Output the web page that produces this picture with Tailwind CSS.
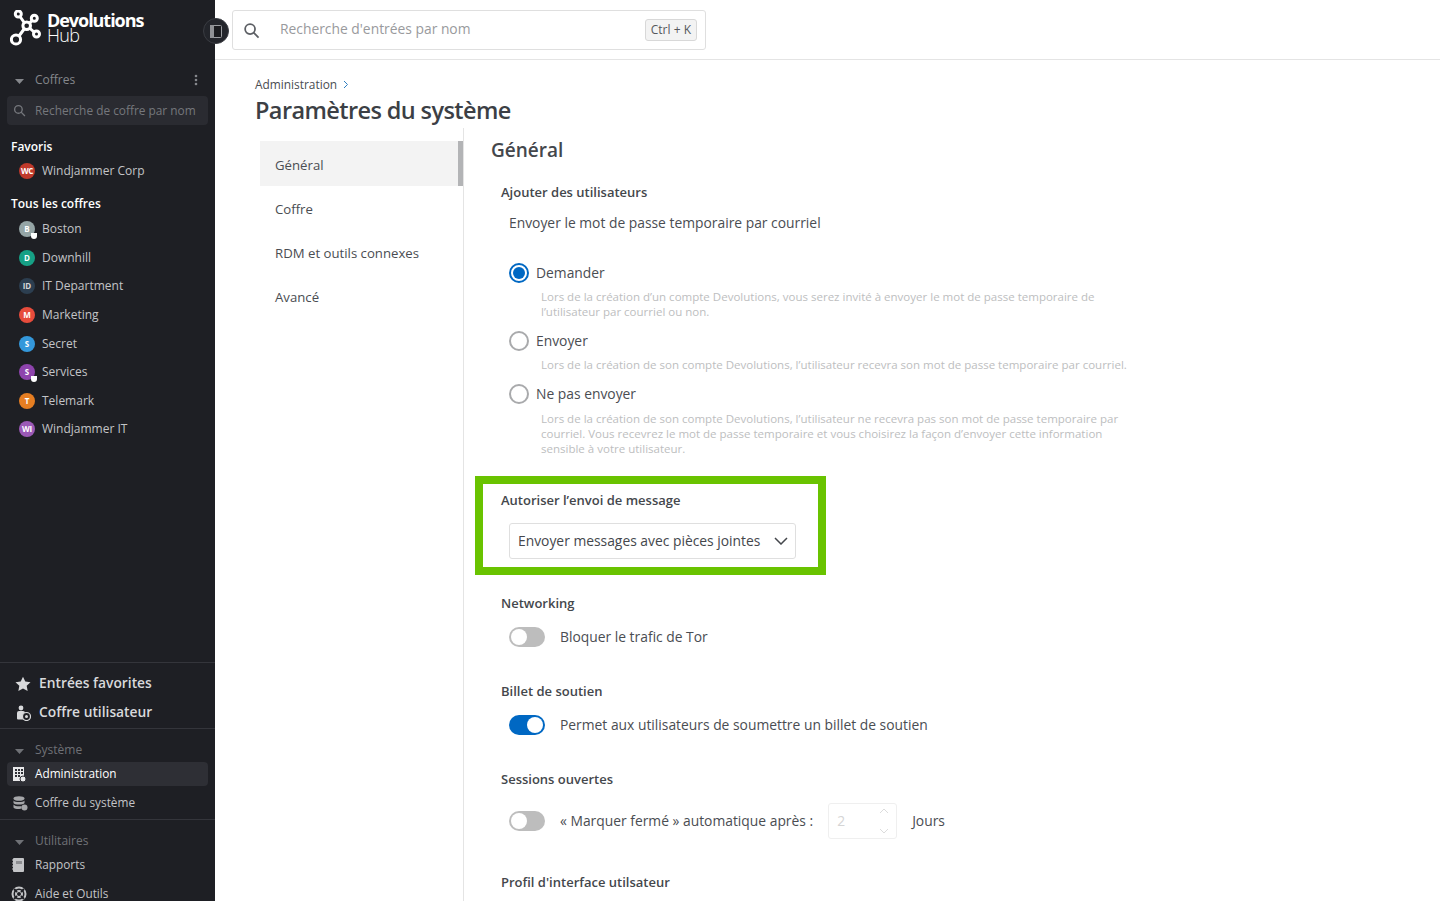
<!DOCTYPE html>
<html lang="fr">
<head>
    <meta charset="UTF-8" />
    <title>Paramètres du système</title>
    <script src="https://cdn.jsdelivr.net/npm/@tailwindcss/browser@4"></script>
</head>
<body class="font-['Open_Sans',sans-serif] bg-white text-[#3c3f45] h-[901px] w-[1440px] overflow-hidden flex">

    <!-- SIDEBAR -->
    <aside class="relative w-[215px] h-[901px] shrink-0 bg-[#1e1f24] flex flex-col overflow-visible z-10">
        <!-- logo -->
        <div class="h-[60px] pl-[10px] pt-[10px] flex items-start gap-[5px]">
            <svg width="32" height="37" viewBox="0 0 32 37" fill="none" stroke="white" stroke-width="3">
                <circle cx="8.300" cy="4" r="3" />
                <circle cx="24.300" cy="8.300" r="3" />
                <circle cx="16.700" cy="15.700" r="3.800" />
                <circle cx="26.500" cy="24" r="3" />
                <circle cx="6" cy="29.500" r="4.600" />
                <path d="M10 6.500l4.500 6.500M22.400 10.200l-3.200 3.200M19.500 18l4.500 4M14.500 18.500L9 26" />
            </svg>
            <div class="text-white text-[18px] leading-[15px] pt-[3px]">
                <div class="font-bold tracking-[-1.05px]">Devolutions</div>
                <div class="font-light tracking-[-0.6px]">Hub</div>
            </div>
        </div>

        <button class="absolute left-[203px] top-[18px] w-[26px] h-[26px] rounded-full bg-[#23252b] border border-[#3a3c42] flex items-center justify-center">
            <svg width="12" height="13" viewBox="0 0 12 13"><rect x="0.500" y="0.500" width="11" height="12" rx="1" fill="#1a1b1f" stroke="#9b9da1" /><rect x="0" y="0" width="4" height="13" fill="#8f9195" /></svg>
        </button>

        <!-- coffres -->
        <div class="h-[20px] mt-[10px] pl-[15px] pr-[17px] flex items-center text-[12px] text-[#85878c]">
            <svg width="9" height="5" viewBox="0 0 9 5" class="mr-[11px] mt-[2px]"><path d="M0 0h9L4.500 5z" fill="#85878c" /></svg>
            <span class="flex-1">Coffres</span>
            <svg width="4" height="12" viewBox="0 0 4 12" fill="#85878c"><circle cx="2" cy="2" r="1.300" /><circle cx="2" cy="6" r="1.300" /><circle cx="2" cy="10" r="1.300" /></svg>
        </div>
        <div class="mx-[7px] mt-[6px] h-[29px] rounded-[4px] bg-[#2a2b31] flex items-center pl-[6px] text-[11.87px] text-[#75777c]">
            <svg width="13" height="13" viewBox="0 0 24 24" fill="none" stroke="#75777c" stroke-width="2.500" class="mr-[9px]"><circle cx="10" cy="10" r="7" /><path d="M15 15l7 7" /></svg>
            <span>Recherche de coffre par nom</span>
        </div>

        <div class="mt-[12px] pl-[11px] text-[12px] font-semibold leading-[20px] text-white">Favoris</div>
        <div class="mt-[2px] h-[24px] pl-[19px] flex items-center gap-[7px] text-[12px] text-[#c3c4c7]">
            <span class="w-[16px] h-[16px] rounded-full bg-[#c0392b] text-white text-[8px] font-bold tracking-[-0.3px] flex items-center justify-center">WC</span>
            <span>Windjammer Corp</span>
        </div>

        <div class="mt-[11px] pl-[11px] text-[12px] font-semibold leading-[20px] text-white">Tous les coffres</div>
        <div class="mt-[1px] flex flex-col text-[12px] text-[#c3c4c7]">
            <div class="h-[28.600px] pl-[19px] flex items-center gap-[7px]">
                <span class="relative w-[16px] h-[16px] rounded-full bg-[#95a5a6] text-white text-[8px] font-bold flex items-center justify-center">B
                    <span class="absolute -right-[2px] -bottom-[2px] w-[6px] h-[6px] rounded-b-full bg-white"></span>
                </span>
                <span>Boston</span>
            </div>
            <div class="h-[28.600px] pl-[19px] flex items-center gap-[7px]">
                <span class="w-[16px] h-[16px] rounded-full bg-[#16a085] text-white text-[8px] font-bold flex items-center justify-center">D</span>
                <span>Downhill</span>
            </div>
            <div class="h-[28.600px] pl-[19px] flex items-center gap-[7px]">
                <span class="w-[16px] h-[16px] rounded-full bg-[#2c3e50] text-[#d5d6d8] text-[8px] font-bold flex items-center justify-center">ID</span>
                <span>IT Department</span>
            </div>
            <div class="h-[28.600px] pl-[19px] flex items-center gap-[7px]">
                <span class="w-[16px] h-[16px] rounded-full bg-[#e74c3c] text-white text-[8px] font-bold flex items-center justify-center">M</span>
                <span>Marketing</span>
            </div>
            <div class="h-[28.600px] pl-[19px] flex items-center gap-[7px]">
                <span class="w-[16px] h-[16px] rounded-full bg-[#3498db] text-white text-[8px] font-bold flex items-center justify-center">S</span>
                <span>Secret</span>
            </div>
            <div class="h-[28.600px] pl-[19px] flex items-center gap-[7px]">
                <span class="relative w-[16px] h-[16px] rounded-full bg-[#8e44ad] text-white text-[8px] font-bold flex items-center justify-center">S
                    <span class="absolute -right-[2px] -bottom-[2px] w-[6px] h-[6px] rounded-b-full bg-white"></span>
                </span>
                <span>Services</span>
            </div>
            <div class="h-[28.600px] pl-[19px] flex items-center gap-[7px]">
                <span class="w-[16px] h-[16px] rounded-full bg-[#e67e22] text-white text-[8px] font-bold flex items-center justify-center">T</span>
                <span>Telemark</span>
            </div>
            <div class="h-[28.600px] pl-[19px] flex items-center gap-[7px]">
                <span class="w-[16px] h-[16px] rounded-full bg-[#9b59b6] text-white text-[8px] font-bold tracking-[-0.3px] flex items-center justify-center">WI</span>
                <span>Windjammer IT</span>
            </div>
        </div>

        <div class="flex-1"></div>

        <!-- bottom -->
        <div class="h-[67px] shrink-0 border-t border-b border-[#34353b] pt-[6px] text-[13.800px] font-semibold text-[#d8d9db]">
            <div class="h-[29px] pl-[15px] flex items-center gap-[8px]">
                <svg width="16" height="16" viewBox="0 0 24 24" fill="#d8d9db"><path d="M12 1l3.400 7.300 7.900 1-5.800 5.400 1.500 7.900L12 18.700l-7 3.900 1.500-7.900L.7 9.300l7.900-1z" /></svg>
                <span>Entrées favorites</span>
            </div>
            <div class="h-[29px] pl-[15px] flex items-center gap-[8px]">
                <svg width="16" height="16" viewBox="0 0 16 16" fill="#d8d9db"><circle cx="6" cy="3" r="2.400" /><path d="M2 8a2 2 0 0 1 2-2h4a2 2 0 0 1 2 2v6.500H3a1 1 0 0 1-1-1z" /><circle cx="11.500" cy="11.500" r="4" fill="#1e1f24" stroke="#d8d9db" stroke-width="1.200" /><circle cx="11.500" cy="11.500" r="1.500" /></svg>
                <span>Coffre utilisateur</span>
            </div>
        </div>
        <div class="h-[91px] shrink-0 border-b border-[#34353b] pt-[11px]">
            <div class="h-[20px] pl-[15px] flex items-center text-[12px] text-[#6f7176]">
                <svg width="9" height="5" viewBox="0 0 9 5" class="mr-[11px] mt-[2px]"><path d="M0 0h9L4.500 5z" fill="#6f7176" /></svg>
                <span>Système</span>
            </div>
            <div class="mx-[7px] mt-[2px] h-[24px] rounded-[4px] bg-[#2e2f35] flex items-center pl-[6px] gap-[9px] text-[11.800px] text-white">
                <svg width="13" height="15" viewBox="0 0 13 15"><rect x="0" y="0" width="11" height="14" fill="#e8e8ea" /><path d="M2 2h2v2H2zM5 2h2v2H5zM8 2h2v2H8zM2 5h2v2H2zM5 5h2v2H5zM8 5h2v2H8zM2 8h2v2H2zM5 8h2v2H5z" fill="#2e2f35" /><circle cx="10" cy="12" r="3" fill="#e8e8ea" stroke="#2e2f35" /></svg>
                <span>Administration</span>
            </div>
            <div class="mx-[7px] mt-[5px] h-[24px] flex items-center pl-[6px] gap-[7px] text-[11.800px] text-[#c3c4c7]">
                <svg width="15" height="15" viewBox="0 0 15 15" fill="#a5a6a9"><ellipse cx="6" cy="2.500" rx="5.500" ry="2.300" /><path d="M.5 4.500c1 2 10 2 11 0v2.500c-1 2-10 2-11 0zM.5 8.500c1 2 7 2 8 1.500v2.500c-1 .8-7 .8-8-1z" /><circle cx="11.500" cy="11.500" r="3" /></svg>
                <span>Coffre du système</span>
            </div>
        </div>
        <div class="h-[81px] shrink-0 pt-[11px]">
            <div class="h-[20px] pl-[15px] flex items-center text-[12px] text-[#6f7176]">
                <svg width="9" height="5" viewBox="0 0 9 5" class="mr-[11px] mt-[2px]"><path d="M0 0h9L4.500 5z" fill="#6f7176" /></svg>
                <span>Utilitaires</span>
            </div>
            <div class="mx-[7px] mt-[2px] h-[24px] flex items-center pl-[5px] gap-[11px] text-[11.800px] text-[#c3c4c7]">
                <svg width="12" height="14" viewBox="0 0 12 14"><rect x="1" y="0" width="11" height="14" rx="1" fill="#c3c4c7" /><path d="M0 2h2M0 5h2M0 8h2M0 11h2" stroke="#c3c4c7" /><path d="M4 3h6v3H4z" fill="#8d8e92" /></svg>
                <span>Rapports</span>
            </div>
            <div class="mt-[5px] h-[24px] pl-[11px] flex items-center gap-[8px] text-[11.800px] text-[#c3c4c7]">
                <svg width="16" height="16" viewBox="0 0 16 16" fill="none" stroke="#c3c4c7"><circle cx="8" cy="8" r="3" stroke-width="2" /><circle cx="8" cy="8" r="6.500" stroke-width="2" /><path d="M3 3l3 3M13 3l-3 3M3 13l3-3M13 13l-3-3" stroke="#1e1f24" stroke-width="2" /></svg>
                <span>Aide et Outils</span>
            </div>
        </div>
    </aside>

    <!-- MAIN -->
    <main class="flex-1 min-w-0 flex flex-col">
        <header class="h-[60px] shrink-0 border-b border-[#e4e4e4] pl-[17px] pt-[10px]">
            <div class="w-[474px] h-[40px] rounded-[3px] border border-[#dfdfdf] flex items-center pl-[10px] pr-[8px]">
                <svg width="17" height="17" viewBox="0 0 24 24" fill="none" stroke="#5c5f64" stroke-width="2.500"><circle cx="10" cy="10" r="7" /><path d="M15 15l7 7" /></svg>
                <span class="ml-[20px] pb-[2px] flex-1 text-[13.850px] text-[#999a9d]">Recherche d'entrées par nom</span>
                <span class="h-[22px] px-[5px] rounded-[3px] border border-[#d8d8d8] bg-[#f3f3f3] text-[12px] text-[#55585c] flex items-center">Ctrl + K</span>
            </div>
        </header>

        <div class="pl-[40px] pt-[15px] h-[68px] shrink-0">
            <div class="flex items-center text-[11.900px] leading-[18px] text-[#4a4d52]">
                Administration
                <svg width="6" height="9" viewBox="0 0 6 9" fill="none" stroke="#2f7fc1" class="ml-[6px]"><path d="M1 1l3.500 3.500L1 8" /></svg>
            </div>
            <h1 class="mt-[1px] text-[23.500px] font-semibold leading-[32px] text-[#3c3f45] tracking-[-0.6px]">Paramètres du système</h1>
        </div>

        <div class="flex flex-1 min-h-0">
            <!-- tabs -->
            <nav class="w-[249px] shrink-0 pl-[45px] pt-[13px] border-r border-[#e4e4e4] text-[13.200px] text-[#4a4d52]">
                <div class="h-[45px] pt-[4px] bg-[#f3f3f3] border-r-[5px] border-[#b3b4b6] pl-[15px] flex items-center">Général</div>
                <div class="h-[44px] pt-[4px] pl-[15px] flex items-center">Coffre</div>
                <div class="h-[44px] pt-[3px] pl-[15px] flex items-center">RDM et outils connexes</div>
                <div class="h-[44px] pt-[4px] pl-[15px] flex items-center">Avancé</div>
            </nav>

            <!-- content -->
            <section class="flex-1 pl-[11px] pt-[9px] min-w-0">
                <h2 class="pl-[16px] text-[19px] font-semibold leading-[27px] text-[#44474c]">Général</h2>

                <div class="pl-[26px] mt-[19px] w-[690px]">
                    <h3 class="text-[13px] font-semibold leading-[18px] text-[#44474c]">Ajouter des utilisateurs</h3>
                    <div class="pl-[8px] mt-[12px] text-[13.850px] leading-[20px] text-[#4a4d52]">Envoyer le mot de passe temporaire par courriel</div>

                    <div class="pl-[8px] mt-[28px] flex items-center gap-[7px] h-[24px] text-[13.850px] text-[#4a4d52]">
                        <span class="w-[20px] h-[20px] rounded-full border-2 border-[#0068c3] flex items-center justify-center"><span class="w-[12px] h-[12px] rounded-full bg-[#0068c3]"></span></span>
                        Demander
                    </div>
                    <p class="pl-[40px] mt-[4px] w-[640px] text-[11.520px] leading-[15px] text-[#bdbec0]">Lors de la création d’un compte Devolutions, vous serez invité à envoyer le mot de passe temporaire de l’utilisateur par courriel ou non.</p>

                    <div class="pl-[8px] mt-[10px] flex items-center gap-[7px] h-[24px] text-[13.850px] text-[#4a4d52]">
                        <span class="w-[20px] h-[20px] rounded-full border-2 border-[#a9aaac]"></span>
                        Envoyer
                    </div>
                    <p class="pl-[40px] mt-[4px] whitespace-nowrap text-[11.520px] leading-[15px] text-[#bdbec0]">Lors de la création de son compte Devolutions, l’utilisateur recevra son mot de passe temporaire par courriel.</p>

                    <div class="pl-[8px] mt-[10px] flex items-center gap-[7px] h-[24px] text-[13.850px] text-[#4a4d52]">
                        <span class="w-[20px] h-[20px] rounded-full border-2 border-[#a9aaac]"></span>
                        Ne pas envoyer
                    </div>
                    <p class="pl-[40px] mt-[5px] w-[625px] text-[11.520px] leading-[15px] text-[#bdbec0]">Lors de la création de son compte Devolutions, l’utilisateur ne recevra pas son mot de passe temporaire par courriel. Vous recevrez le mot de passe temporaire et vous choisirez la façon d’envoyer cette information sensible à votre utilisateur.</p>
                </div>

                <!-- highlighted setting -->
                <div class="mt-[20px] w-[351px] h-[99px] border-[8px] border-[#69c300] pl-[18px] pt-[7px]">
                    <h3 class="text-[13px] font-semibold leading-[18px] text-[#44474c]">Autoriser l’envoi de message</h3>
                    <div class="ml-[8px] mt-[14px] w-[287px] h-[36px] rounded-[3px] border border-[#dfdfdf] pl-[8px] pr-[7px] flex items-center justify-between text-[13.850px] text-[#44474c]">
                        <span>Envoyer messages avec pièces jointes</span>
                        <svg width="14" height="8" viewBox="0 0 14 8" fill="none" stroke="#44474c" stroke-width="1.500"><path d="M1 1l6 6 6-6" /></svg>
                    </div>
                </div>

                <div class="pl-[26px] mt-[19px]">
                    <h3 class="text-[13px] font-semibold leading-[18px] text-[#44474c]">Networking</h3>
                    <div class="pl-[8px] mt-[15px] flex items-center gap-[15px] h-[20px] text-[13.850px] text-[#4a4d52]">
                        <span class="w-[36px] h-[20px] rounded-full bg-[#bdbdbd] flex items-center pl-[2px]"><span class="w-[16px] h-[16px] rounded-full bg-white"></span></span>
                        Bloquer le trafic de Tor
                    </div>

                    <h3 class="mt-[35px] text-[13px] font-semibold leading-[18px] text-[#44474c]">Billet de soutien</h3>
                    <div class="pl-[8px] mt-[15px] flex items-center gap-[15px] h-[20px] text-[13.850px] text-[#4a4d52]">
                        <span class="w-[36px] h-[20px] rounded-full bg-[#0068c3] flex items-center justify-end pr-[2px]"><span class="w-[16px] h-[16px] rounded-full bg-white"></span></span>
                        Permet aux utilisateurs de soumettre un billet de soutien
                    </div>

                    <h3 class="mt-[35px] text-[13px] font-semibold leading-[18px] text-[#44474c]">Sessions ouvertes</h3>
                    <div class="pl-[8px] mt-[15px] flex items-center h-[36px] text-[13.850px] text-[#4a4d52]">
                        <span class="w-[36px] h-[20px] rounded-full bg-[#bdbdbd] flex items-center pl-[2px]"><span class="w-[16px] h-[16px] rounded-full bg-white"></span></span>
                        <span class="ml-[15px]">« Marquer fermé » automatique après :</span>
                        <span class="ml-[15px] w-[69px] h-[36px] rounded-[3px] border border-[#efefef] pl-[8px] pr-[7px] flex items-center justify-between text-[#d5d5d5]">
                            2
                            <svg width="10" height="28" viewBox="0 0 10 28" fill="none" stroke="#dcdcdc"><path d="M1 6l4-4 4 4M1 22l4 4 4-4" /></svg>
                        </span>
                        <span class="ml-[15px]">Jours</span>
                    </div>

                    <h3 class="mt-[34px] text-[13px] font-semibold leading-[18px] text-[#44474c]">Profil d'interface utilsateur</h3>
                </div>
            </section>
        </div>
    </main>
</body>
</html>
